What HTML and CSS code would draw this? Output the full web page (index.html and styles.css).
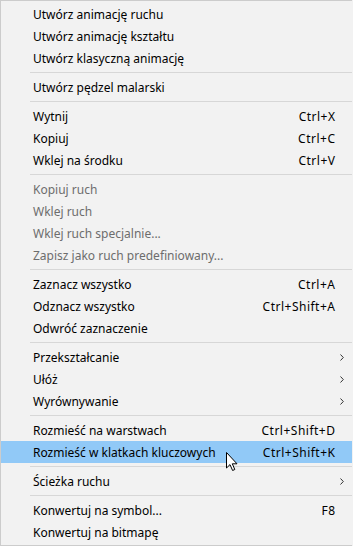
FILE: index.html
```html
<!DOCTYPE html>
<html lang="pl">
<head>
  <meta charset="UTF-8">
  <title>Menu kontekstowe</title>
  <link rel="stylesheet" href="styles.css">
</head>
<body>
  <div class="menu">
    <div class="item"><span class="label">Utwórz animację ruchu</span><span class="key"></span><span class="sub"></span></div>
    <div class="item"><span class="label">Utwórz animację kształtu</span><span class="key"></span><span class="sub"></span></div>
    <div class="item"><span class="label">Utwórz klasyczną animację</span><span class="key"></span><span class="sub"></span></div>
    <div class="sep"></div>
    <div class="item"><span class="label">Utwórz pędzel malarski</span><span class="key"></span><span class="sub"></span></div>
    <div class="sep"></div>
    <div class="item"><span class="label">Wytnij</span><span class="key">Ctrl+X</span><span class="sub"></span></div>
    <div class="item"><span class="label">Kopiuj</span><span class="key">Ctrl+C</span><span class="sub"></span></div>
    <div class="item"><span class="label">Wklej na środku</span><span class="key">Ctrl+V</span><span class="sub"></span></div>
    <div class="sep"></div>
    <div class="item disabled"><span class="label">Kopiuj ruch</span><span class="key"></span><span class="sub"></span></div>
    <div class="item disabled"><span class="label">Wklej ruch</span><span class="key"></span><span class="sub"></span></div>
    <div class="item disabled"><span class="label">Wklej ruch specjalnie...</span><span class="key"></span><span class="sub"></span></div>
    <div class="item disabled"><span class="label">Zapisz jako ruch predefiniowany...</span><span class="key"></span><span class="sub"></span></div>
    <div class="sep"></div>
    <div class="item"><span class="label">Zaznacz wszystko</span><span class="key">Ctrl+A</span><span class="sub"></span></div>
    <div class="item"><span class="label">Odznacz wszystko</span><span class="key">Ctrl+Shift+A</span><span class="sub"></span></div>
    <div class="item"><span class="label">Odwróć zaznaczenie</span><span class="key"></span><span class="sub"></span></div>
    <div class="sep"></div>
    <div class="item"><span class="label">Przekształcanie</span><span class="key"></span><span class="sub"><svg viewBox="0 0 4 7"><path d="M0.5 0.5 L3.3 3.5 L0.5 6.5"/></svg></span></div>
    <div class="item"><span class="label">Ułóż</span><span class="key"></span><span class="sub"><svg viewBox="0 0 4 7"><path d="M0.5 0.5 L3.3 3.5 L0.5 6.5"/></svg></span></div>
    <div class="item"><span class="label">Wyrównywanie</span><span class="key"></span><span class="sub"><svg viewBox="0 0 4 7"><path d="M0.5 0.5 L3.3 3.5 L0.5 6.5"/></svg></span></div>
    <div class="sep"></div>
    <div class="item"><span class="label">Rozmieść na warstwach</span><span class="key">Ctrl+Shift+D</span><span class="sub"></span></div>
    <div class="item hover"><span class="label">Rozmieść w klatkach kluczowych</span><span class="key">Ctrl+Shift+K</span><span class="sub"></span>
      <svg class="cursor" viewBox="0 0 12 19"><path d="M0.5 0.5 L0.5 16 L4 12.6 L6.6 18.5 L8.8 17.5 L6.3 11.8 L11 11.8 Z"/></svg>
    </div>
    <div class="sep"></div>
    <div class="item"><span class="label">Ścieżka ruchu</span><span class="key"></span><span class="sub"><svg viewBox="0 0 4 7"><path d="M0.5 0.5 L3.3 3.5 L0.5 6.5"/></svg></span></div>
    <div class="sep"></div>
    <div class="item"><span class="label">Konwertuj na symbol...</span><span class="key">F8</span><span class="sub"></span></div>
    <div class="item"><span class="label">Konwertuj na bitmapę</span><span class="key"></span><span class="sub"></span></div>
  </div>
</body>
</html>
```

FILE: styles.css
```css
html, body {
  margin: 0; padding: 0;
  background: #f2f2f2;
}

/* the popup itself, cut off at the right edge */
.menu {
  width: 352px; height: 546px;
  box-sizing: border-box;
  background: #f2f2f2;
  border: 1px solid #cccccc; border-right: none;
  padding: 2px 0;
  font-family: "Noto Sans", "Open Sans", sans-serif;
  font-size: 12px;
  color: #000;
}

.item {
  display: grid;
  grid-template-columns: 1fr auto 17px;
  align-items: center;
  height: 22px;
  padding-left: 32px;
  position: relative;
}
.item.disabled { color: #6d6d6d; }
.item.hover { background: #91c9f7; }

.key {
  text-align: right;
  letter-spacing: 0.5px;
  margin-right: -0.5px;
}

.sub {
  display: flex; align-items: center;
  padding-left: 5px;
}
.sub svg {
  width: 4px; height: 7px;
  fill: none; stroke: #333; stroke-width: 1;
}

.sep {
  height: 7px;
  display: flex; align-items: center;
  padding-left: 29px;
}
.sep::after {
  content: "";
  flex: 1;
  height: 1px;
  background: #d7d7d7;
}

/* mouse pointer over the hovered row */
.cursor {
  position: absolute;
  left: 225px; top: 11px;
  width: 12px; height: 19px;
  fill: #fff; stroke: #000; stroke-width: 1;
  stroke-linejoin: miter;
}
```
